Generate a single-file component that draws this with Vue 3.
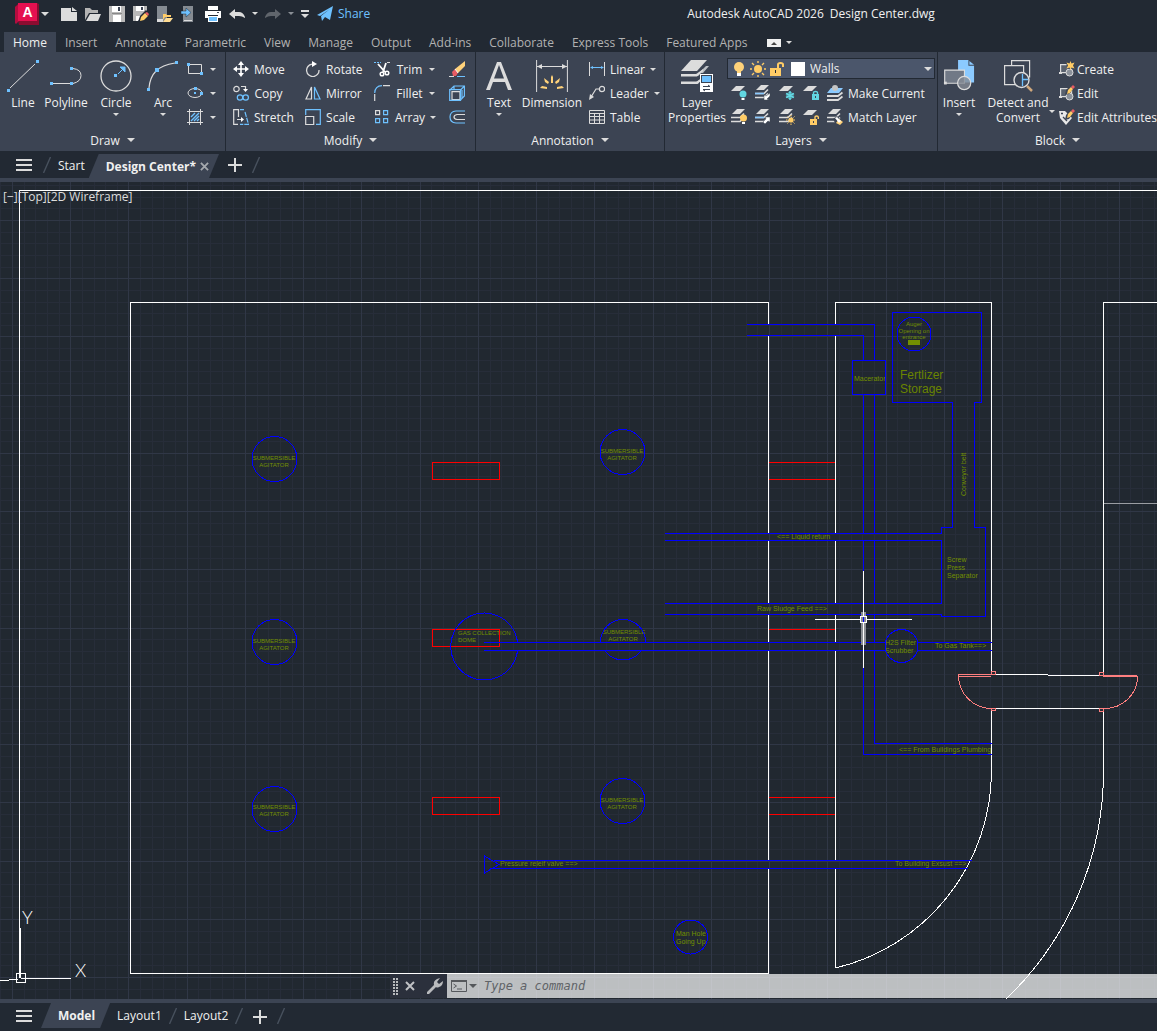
<script setup>
import { ref } from 'vue'

const ribbonTabs = ['Home', 'Insert', 'Annotate', 'Parametric', 'View', 'Manage', 'Output', 'Add-ins', 'Collaborate', 'Express Tools', 'Featured Apps']
const activeTab = ref('Home')
const command = ref('')
const layer = ref('Walls')

const quickAccess = [
  { id: 'new', label: 'New' },
  { id: 'open', label: 'Open' },
  { id: 'save', label: 'Save' },
  { id: 'saveas', label: 'Save As' },
  { id: 'openweb', label: 'Open from Web and Mobile' },
  { id: 'saveweb', label: 'Save to Web and Mobile' },
  { id: 'plot', label: 'Plot' },
]

const modifyColumns = [
  [['move', 'Move'], ['copy', 'Copy'], ['stretch', 'Stretch']],
  [['rotate', 'Rotate'], ['mirror', 'Mirror'], ['scale', 'Scale']],
  [['trim', 'Trim', true], ['fillet', 'Fillet', true], ['array', 'Array', true]],
]
const annotationTools = [['linear', 'Linear', true], ['leader', 'Leader', true], ['table', 'Table']]
const layerRows = [
  { icons: ['lyoff', 'lyiso', 'lyfrz', 'lylock'], main: ['lycur', 'Make Current'] },
  { icons: ['lyon', 'lyuniso', 'lythaw', 'lyunlock'], main: ['lymatch', 'Match Layer'] },
]
const blockTools = [['bcreate', 'Create'], ['bedit', 'Edit'], ['battr', 'Edit Attributes']]

// Drawing grid: minor lines with a major line every fifth
const TOP = 182
const step = 11.648
function gridPath(major) {
  let d = ''
  for (let i = -1; i < 240; i++) {
    if ((i % 5 === 0) !== major) continue
    d += `M${Math.round(12 + i * step) + 0.5} ${TOP}V2400`
  }
  for (let i = -3; i < 200; i++) {
    if ((i % 5 === 0) !== major) continue
    d += `M0 ${Math.round(220 + i * step) + 0.5}H2800`
  }
  return d
}
const minorGrid = gridPath(false)
const majorGrid = gridPath(true)

const agitators = [
  { x: 274, y: 459, t: 460 }, { x: 274, y: 642, t: 643 }, { x: 274, y: 809, t: 809 },
  { x: 622, y: 452, t: 453 }, { x: 622, y: 801, t: 802 },
]
const notes = [
  { x: 854, y: 381, t: 'Macerator' },
  { x: 777, y: 539, t: '<== Liquid return' },
  { x: 757, y: 611, t: 'Raw Sludge Feed ==>' },
  { x: 885, y: 645, t: 'H2S Filter' },
  { x: 885, y: 653, t: 'Scrubber' },
  { x: 935, y: 648, t: 'To Gas Tank==>' },
  { x: 899, y: 752, t: '<== From Buildings Plumbing' },
  { x: 500, y: 866, t: 'Pressure releif valve ==>' },
  { x: 895, y: 866, t: 'To Building Exsust ==>' },
  { x: 947, y: 562, t: 'Screw' },
  { x: 947, y: 570, t: 'Press' },
  { x: 947, y: 578, t: 'Separator' },
  { x: 676, y: 936, t: 'Man Hole' },
  { x: 676, y: 944, t: 'Going Up' },
]
</script>

<template>
  <svg class="sprite" aria-hidden="true">
    <symbol id="i-new" viewBox="0 0 16 16"><path fill="#dcdcdc" d="M0 2h10v4h6v9H0z" /><path fill="#dcdcdc" d="M11 1l5 4h-5z" /></symbol>
    <symbol id="i-open" viewBox="0 0 16 16"><path fill="#b4b4b4" d="M0 14V2h5l2 2h6v3H4z" /><path fill="#dcdcdc" d="M1 15l4-7h11l-3 7z" /></symbol>
    <symbol id="i-save" viewBox="0 0 16 16"><path fill="#b9b9b9" d="M0 0h16v16H0z" /><path fill="#fff" d="M3 0h9v6H3zM4 9h8v7H4z" /><path fill="#3c4453" d="M9 1h2v4H9z" /><path fill="#888" d="M3 7h10v1H3z" /></symbol>
    <symbol id="i-saveas" viewBox="0 0 16 16"><path fill="#b9b9b9" d="M0 0h14v5l-9 10H0z" /><path fill="#fff" d="M3 0h8v5H3zM3 10h5l-3 5H3z" /><path fill="#3c4453" d="M8 1h2v3H8z" /><path fill="#222933" d="M5 16l2-6 6-6 3 3v4l-5 5z" /><path fill="#ffcc66" d="M7 15l1-4 4-4 3 3-4 4z" /><path fill="#e85c63" d="M12 7l2-1 2 2-1 2z" /></symbol>
    <symbol id="i-openweb" viewBox="0 0 16 16"><path fill="#858b92" d="M0 0h10v16H0z" /><path fill="#dcdcdc" d="M0 13h6v3H0z" /><path fill="#ffcc66" d="M6 8h3l1 1h4v2H8l-2 3z" /><path fill="#ffdc92" d="M6 16l3-4h7l-3 4z" /></symbol>
    <symbol id="i-saveweb" viewBox="0 0 16 16"><path fill="#858b92" d="M2 0h10v16H2z" /><path fill="#dcdcdc" d="M3 14h8v1H3z" /><path fill="#6ec1ff" stroke="#222933" stroke-width=".500" d="M0 5h5V2l5 4.500L5 11V8H0z" /></symbol>
    <symbol id="i-plot" viewBox="0 0 16 16"><path fill="#fff" d="M3 0h10v4H3zM0 5h16v7h-3V9H3v3H0z" /><path fill="#3c4453" d="M12 6h2v1h-2z" /><path fill="#fff" d="M3 10h10v6H3z" /><path fill="#6ec1ff" d="M4 11h8v4H4z" /></symbol>
    <symbol id="i-undo" viewBox="0 0 16 16"><path fill="currentColor" d="M0 8l6-5v3h4q4 0 6 5v1q-3-2-6-2H6v3z" /></symbol>
    <symbol id="i-redo" viewBox="0 0 16 16"><path fill="currentColor" d="M16 8l-6-5v3H6q-4 0-6 5v1q3-2 6-2h4v3z" /></symbol>
    <symbol id="i-share" viewBox="0 0 16 16"><path fill="#6ec1ff" d="M0 9L16 0l-3 14-5-3-3 4-1-5L13 3 3 10z" /></symbol>

    <symbol id="i-line" viewBox="0 0 32 32"><path stroke="#dcdcdc" d="M3 28L28 4" /><path fill="#6ec1ff" d="M0 29h3v3H0zM29 0h3v3h-3z" /></symbol>
    <symbol id="i-polyline" viewBox="0 0 32 32"><path stroke="#dcdcdc" fill="none" d="M3 23.500h18M23 8.500q8 1 8 7t-8 8" /><path fill="#6ec1ff" d="M0 22h3v3H0zM20 22h3v3h-3zM20 7h3v3h-3z" /></symbol>
    <symbol id="i-circle" viewBox="0 0 32 32"><circle cx="16" cy="16" r="15" fill="none" stroke="#dcdcdc" stroke-width="1.300" /><path stroke="#6ec1ff" fill="#6ec1ff" d="M18 14l6-6M25 7h-5l5 5z" /><path fill="#6ec1ff" d="M14 14h3v3h-3z" /></symbol>
    <symbol id="i-arc" viewBox="0 0 32 32"><path stroke="#dcdcdc" fill="none" d="M2 28Q3 17 9 11T28 3" stroke-width="1.200" /><path fill="#6ec1ff" d="M0 28h3v3H0zM8 8h4v4H8zM28 1h3v3h-3z" /></symbol>
    <symbol id="i-rect" viewBox="0 0 16 16"><path stroke="#dcdcdc" fill="none" d="M1.500 3.500h13v9h-13z" /><path fill="#6ec1ff" d="M0 2h3v3H0zM13 11h3v3h-3z" /></symbol>
    <symbol id="i-ellipse" viewBox="0 0 16 16"><ellipse cx="8" cy="8" rx="7" ry="4.500" stroke="#dcdcdc" fill="none" /><path fill="#6ec1ff" d="M7 2h3v3H7zM7 7h2v2H7zM13 7h3v3h-3z" /></symbol>
    <symbol id="i-hatch" viewBox="0 0 16 16"><path stroke="#6ec1ff" stroke-width="1.400" d="M4 8l4-4M4 12l8-8M7 12l5-5M10 12l2-2" /><path stroke="#dcdcdc" fill="none" d="M2.500 0v16M13.500 0v16M0 2.500h16M0 13.500h16" /></symbol>

    <symbol id="i-move" viewBox="0 0 16 16"><path stroke="#fff" stroke-width="1.600" d="M8 2v12M2 8h12" /><path fill="#fff" d="M8 0l3 4H5zM8 16l3-4H5zM0 8l4-3v6zM16 8l-4-3v6z" /></symbol>
    <symbol id="i-copy" viewBox="0 0 16 16"><g fill="none" stroke-width="1.200"><circle cx="3.500" cy="4" r="2.700" stroke="#dcdcdc" /><circle cx="7" cy="12.500" r="2.700" stroke="#6ec1ff" /><circle cx="12.700" cy="12.500" r="2.700" stroke="#6ec1ff" /><path stroke="#dcdcdc" d="M8 1.500h4.500V6" /></g><path fill="#fff" d="M10 4h5l-2.500 3z" /></symbol>
    <symbol id="i-stretch" viewBox="0 0 16 16"><path stroke="#dcdcdc" fill="none" stroke-width="1.200" d="M5.500 8V.700H.700v14.600H5M4 10.500h5" /><path fill="#fff" d="M8 8l3 2.500L8 13z" /><path stroke="#6ec1ff" stroke-width="1.200" fill="none" d="M7 .700h4M12 3l3.500 12.300H7" stroke-dasharray="5 1" /></symbol>
    <symbol id="i-rotate" viewBox="0 0 16 16"><path stroke="#dcdcdc" stroke-width="1.300" fill="none" d="M7 3.200A6.200 6.200 0 1 0 14 9" /><path fill="#fff" d="M7 0l5 3-5 3z" /></symbol>
    <symbol id="i-mirror" viewBox="0 0 16 16"><path stroke="#dcdcdc" fill="none" stroke-width="1.200" d="M6.500 2L1 14h5.500z" /><path stroke="#6ec1ff" fill="none" stroke-width="1.200" d="M9.500 2L15 14H9.500z" /></symbol>
    <symbol id="i-scale" viewBox="0 0 16 16"><path stroke="#6ec1ff" fill="none" stroke-width="1.200" d="M.700 6V.700h14.600v14.600H11" /><path stroke="#dcdcdc" fill="none" stroke-width="1.200" d="M.700 7.500h8v8h-8z" /></symbol>
    <symbol id="i-trim" viewBox="0 0 16 16"><path stroke="#6ec1ff" d="M0 1.500h7" stroke-dasharray="2 1" /><path stroke="#dcdcdc" d="M13 1.500h3" /><path stroke="#fff" stroke-width="1.800" d="M4 3l7 8M12 2l-3 9" /><g fill="none" stroke="#fff" stroke-width="1.500"><circle cx="8" cy="13" r="1.800" /><circle cx="13" cy="12" r="1.800" /></g></symbol>
    <symbol id="i-fillet" viewBox="0 0 16 16"><path stroke="#6ec1ff" fill="none" stroke-width="1.200" d="M.700 8Q1 1 8 .700" /><path stroke="#dcdcdc" stroke-width="1.200" d="M9 .700h7M.700 9v7" /></symbol>
    <symbol id="i-array" viewBox="0 0 16 16"><g fill="none" stroke-width="1.200"><path stroke="#dcdcdc" d="M1.600 1.600h4v4h-4z" /><path stroke="#6ec1ff" d="M9.600 1.600h4v4h-4zM1.600 9.600h4v4h-4zM9.600 9.600h4v4h-4z" /></g></symbol>
    <symbol id="i-erase" viewBox="0 0 16 16"><path fill="#ffd27a" d="M6 8l10-8v5L9 12z" /><path fill="#e85c63" d="M3 11l3-3 3 4-2 3H4z" /><path stroke="#fff" d="M6 8l3 4" /><path stroke="#dcdcdc" d="M0 15.500h5" /><path stroke="#6ec1ff" d="M8 15.500h8" /></symbol>
    <symbol id="i-explode" viewBox="0 0 16 16"><g fill="none" stroke-width="1.200"><path stroke="#6ec1ff" d="M1 5l4-4h10.400v10l-4 4M11.500 5l4-4M5 1v3M13 5v8" /><path stroke="#dcdcdc" d="M3 6.600h8v8H3z" /><path stroke="#6ec1ff" d="M.700 4.600V15.300H11.500V4.600z" /></g></symbol>
    <symbol id="i-offset" viewBox="0 0 16 16"><g fill="none" stroke-width="1.200"><path stroke="#6ec1ff" d="M16 2H7q-6 .500-6 6t6 6h9" /><path stroke="#dcdcdc" d="M16 5.500H8Q5 6 5 8t3 2.500h8" /></g></symbol>

    <symbol id="i-text" viewBox="0 0 32 32"><path fill="#dcdcdc" d="M3 30L14 2h4l11 28h-4l-3-8H10l-3 8zM11 18.500h10L16 5z" /></symbol>
    <symbol id="i-dimension" viewBox="0 0 32 32"><path stroke="#dcdcdc" d="M.600 0v32M31.400 0v32M1 6.500h30" /><path fill="#dcdcdc" d="M1 6.500l5-2.500v5zM31 6.500l-5-2.500v5z" /><path fill="#ffd27a" d="M15 17l1-2 1 2v6h-2zM8 18l5 4-1 2-3-2zM24 18l-5 4 1 2 3-2zM4 28l2-2 5 1v2zM28 28l-2-2-5 1v2z" /></symbol>
    <symbol id="i-linear" viewBox="0 0 16 16"><path stroke="#dcdcdc" d="M.500 1v14M15.500 1v14" /><path stroke="#6ec1ff" d="M2 6.500h12" /><path fill="#6ec1ff" d="M1 6.500L4 5v3zM15 6.500L12 5v3z" /></symbol>
    <symbol id="i-leader" viewBox="0 0 16 16"><circle cx="13" cy="4" r="2.600" stroke="#dcdcdc" fill="none" stroke-width="1.200" /><path stroke="#dcdcdc" fill="none" stroke-width="1.200" d="M10 4H7L2 12" /><path fill="#dcdcdc" d="M0 15l1-6 4 3z" /></symbol>
    <symbol id="i-table" viewBox="0 0 16 16"><path fill="none" stroke="#dcdcdc" d="M.500 1.500h15v13H.500zM.500 4.500h15M.500 7.500h15M.500 11h15M5.500 5v10M10.500 5v10" /></symbol>

    <symbol id="i-layerprops" viewBox="0 0 32 32"><path fill="#dcdcdc" d="M10 0h16L16 11H0z" /><path fill="#bcc0c5" d="M21 10l4-4h3l-6 7h-2L17 16H4L1 14h14zM21 18l-4 6H4l-3-2h14z" /><path fill="#dcdcdc" d="M0 14h16l6-5v2l-6 5.500H0zM0 21.500h16l4-3v2.500l-4 3H0z" /><path fill="#fff" d="M19 14h13v18H19z" /><path fill="#3c4453" d="M20 15h11v8H20z" /><path fill="#6ec1ff" d="M21 16h9v6h-9z" /><path stroke="#3c4453" d="M22 26.500h7M22 29.500h7M27 25l2 1.500M24 31l-2-1.500" /></symbol>
    <symbol id="i-bulb" viewBox="0 0 16 16"><circle cx="8" cy="6" r="5" fill="#ffd27a" /><path fill="#ffd27a" d="M6 9h4v3H6z" /><path fill="#fff" d="M6 12h4v3H6z" /></symbol>
    <symbol id="i-sun" viewBox="0 0 16 16"><circle cx="8" cy="8" r="4" fill="#ffcc66" /><path stroke="#ffcc66" stroke-width="1.400" d="M8 0v2M8 14v2M0 8h2M14 8h2M2 2l2 2M12 12l2 2M14 2l-2 2M2 14l2-2" /></symbol>
    <symbol id="i-unlock" viewBox="0 0 16 16"><path fill="#ffcc66" d="M1 7h11v8H1z" /><path stroke="#ffcc66" stroke-width="2" fill="none" d="M9 7V3.500Q9 2 11.500 2T14 3.500V6" /><path fill="#222933" d="M6 9h1v3H6z" /></symbol>
    <symbol id="p-layer1" viewBox="0 0 16 16"><path fill="#dcdcdc" d="M5 1h9L9 6H0z" /></symbol>
    <symbol id="p-layer3" viewBox="0 0 16 16"><path fill="#dcdcdc" d="M6 0h8L9 5H1z" /><path stroke="#dcdcdc" stroke-width="1.600" d="M0 8.500h9l4-4M0 12.500h9l4-4" fill="none" /></symbol>
    <symbol id="i-lyoff" viewBox="0 0 16 16"><use href="#p-layer1" /><circle cx="12" cy="9" r="3.500" fill="#62d7e2" /><path fill="#fff" d="M10.500 13h3v2h-3z" /></symbol>
    <symbol id="i-lyiso" viewBox="0 0 16 16"><use href="#p-layer3" /><path stroke="#8bcaff" stroke-width="1.600" d="M0 8.500h9" /><path fill="#fff" stroke="#3c4453" stroke-width=".500" d="M9 15v-5l2 1 4-3v3l-3 3 2 1z" /></symbol>
    <symbol id="i-lyfrz" viewBox="0 0 16 16"><use href="#p-layer1" /><path stroke="#62d7e2" stroke-width="1.500" d="M11 6v9M7 8.500l8 4M15 8.500l-8 4" /><circle cx="11" cy="10.500" r="3" fill="none" stroke="#62d7e2" /></symbol>
    <symbol id="i-lylock" viewBox="0 0 16 16"><use href="#p-layer1" /><path fill="#62d7e2" d="M9 9h7v6H9z" /><path fill="none" stroke="#62d7e2" stroke-width="1.400" d="M10.500 9V7.500q0-1 2-1t2 1V9" /><path fill="#3c4453" d="M12 11h1v2h-1z" /></symbol>
    <symbol id="i-lyon" viewBox="0 0 16 16"><use href="#p-layer3" /><circle cx="12.500" cy="9" r="3.500" fill="#ffcc66" /><path fill="#fff" d="M11 13h3v2h-3z" /></symbol>
    <symbol id="i-lyuniso" viewBox="0 0 16 16"><use href="#p-layer3" /><path stroke="#8bcaff" stroke-width="1.600" d="M0 8.500h9" /><path fill="#fff" stroke="#3c4453" stroke-width=".500" d="M15 8v5l-2-1-3 3-2-2 3-3-1-2z" /></symbol>
    <symbol id="i-lythaw" viewBox="0 0 16 16"><use href="#p-layer3" /><circle cx="12" cy="11" r="2.600" fill="#ffcc66" /><path stroke="#ffcc66" d="M12 6v1.500M12 14.500V16M7 11h1.500M15 11h1M8.500 7.500l1 1M15.500 7.500l-1 1M8.500 14.500l1-1M15.500 14.500l-1-1" /></symbol>
    <symbol id="i-lyunlock" viewBox="0 0 16 16"><use href="#p-layer1" /><path fill="#ffcc66" d="M7 10h7v6H7z" /><path fill="none" stroke="#ffcc66" stroke-width="1.400" d="M12 10V8q0-1 1.600-1T15.300 8v2" /><path fill="#3c4453" d="M10 12h1v2h-1z" /></symbol>
    <symbol id="i-lycur" viewBox="0 0 16 16"><path fill="#8bcaff" d="M4 3h12l-4 5H0z" /><path fill="none" stroke="#dcdcdc" stroke-width="1.800" d="M0 11h11l4.500-3.500M0 15h11l4.500-3.500" /><circle cx="8" cy="3" r="3" fill="#c4c4c4" /></symbol>
    <symbol id="i-lymatch" viewBox="0 0 16 16"><use href="#p-layer3" /><path fill="#3c4453" d="M6 10l4-3 6 6-3 3H9z" /><path fill="#ffd27a" d="M9 14l3-4 4 3-3 3z" /><path fill="#fff" d="M8 9l2-1 4 4-2 2z" /></symbol>

    <symbol id="i-insert" viewBox="0 0 32 34"><path fill="#8bcaff" d="M15 0h11v6h6v18H15z" /><path fill="#8bcaff" d="M27 1l5 4h-5z" /><path fill="#717986" stroke="#dcdcdc" stroke-width="1.200" d="M.800 10.700h21v14h-21z" /><circle cx="21.500" cy="24.500" r="7" fill="#848b95" fill-opacity=".8" stroke="#dcdcdc" stroke-width="1.300" /><path fill="#dcdcdc" d="M0 23h3v3H0z" /></symbol>
    <symbol id="i-detect" viewBox="0 0 32 32"><path fill="none" stroke="#dcdcdc" stroke-width="1.200" d="M9.600 6V.600h18v17M2.600 5.600h19v19h-19z" /><circle cx="19.500" cy="20" r="7.500" fill="#3c4453" stroke="#dcdcdc" stroke-width="1.400" /><path stroke="#6ec1ff" fill="none" stroke-width="1.300" d="M20.500 14v12M21 19.500h5" /><path stroke="#cfa77c" stroke-width="2.500" d="M25 26l5 5" /></symbol>
    <symbol id="p-block" viewBox="0 0 16 16"><path stroke="#dcdcdc" fill="#59616e" stroke-width="1.200" d="M1.600 3.600h11v8h-11z" /><circle cx="10.500" cy="11.500" r="3.500" fill="#8b919a" stroke="#dcdcdc" /><path fill="#dcdcdc" d="M0 11h3v2H0z" /></symbol>
    <symbol id="i-bcreate" viewBox="0 0 16 16"><use href="#p-block" /><circle cx="11.500" cy="4" r="4" fill="#3c4453" /><path fill="#ffcc66" d="M11.500 0l1 2.500 3-1-1.500 3 1.500 3-3-1-1 2.500-1-2.500-3 1 1.500-3-1.500-3 3 1z" /></symbol>
    <symbol id="i-bedit" viewBox="0 0 16 16"><use href="#p-block" /><path fill="#3c4453" d="M6 10l1-5 6-6 3 3-6 7z" /><path fill="#ffcc66" d="M8 9l1-4 3-3 2 2-3 4z" /><path fill="#e85c63" d="M12 2l2-2 2 2-2 2z" /></symbol>
    <symbol id="i-battr" viewBox="0 0 16 16"><path fill="#e8e8e8" d="M0 2h6l2 2 5 5-6 7-6-7z" /><path stroke="#3c4453" stroke-width="1.300" fill="none" d="M2 4.500h2M4 8l4 4" /><path fill="#3c4453" d="M6 11l1-5 6-7 3 3-6 8z" /><path fill="#ffcc66" d="M8 9l1-4 3-3 2 2-3 4z" /><path fill="#e85c63" d="M12 2l2-2 2 2-2 2z" /></symbol>
    <symbol id="i-menu" viewBox="0 0 16 12"><path fill="#dcdcdc" d="M0 0h16v2H0zM0 5h16v2H0zM0 10h16v2H0z" /></symbol>
    <symbol id="i-plus" viewBox="0 0 14 14"><path fill="#dcdcdc" d="M6 0h2v14H6zM0 6h14v2H0z" /></symbol>
    <symbol id="i-close" viewBox="0 0 10 10"><path stroke="currentColor" stroke-width="2" d="M1 1l8 8M9 1L1 9" /></symbol>
    <symbol id="i-slash" viewBox="0 0 8 16"><path stroke="#48515e" stroke-width="1.400" d="M7.500 0L.500 16" /></symbol>
    <symbol id="i-wrench" viewBox="0 0 16 16"><path fill="#b8babd" d="M0 14l7-7q-1-4 3-6l3-1-3 4 2 2 4-3q0 5-4 6-2 1-3 0l-7 7H0z" /></symbol>
    <symbol id="i-prompt" viewBox="0 0 16 12"><path fill="none" stroke="#55585c" d="M.500.500h15v11H.500z" /><path fill="#55585c" d="M0 0h16v2H0z" /><path fill="none" stroke="#55585c" d="M2.500 4l3 2-3 2M6 9h5" /></symbol>
  </svg>

  <div class="app">
    <header class="titlebar">
      <button class="logo" aria-label="Application menu">
        <svg width="24" height="22" viewBox="0 0 24 22"><path fill="#8b0c30" d="M0 4L4 0h18l2 1v21H4z" /><path fill="#b50d3f" d="M0 4L4 1v17l-3 3-1-1z" /><path fill="#e51050" d="M3 0h19v18H3z" /></svg>
        <span>A</span>
      </button>
      <i class="caret wide"></i>
      <nav class="quick" aria-label="Quick access">
        <button v-for="q in quickAccess" :key="q.id" :aria-label="q.label"><svg class="i16"><use :href="'#i-' + q.id" /></svg></button>
        <button aria-label="Undo"><svg class="i16"><use href="#i-undo" /></svg></button>
      </nav>
      <i class="caret"></i>
      <button class="redo" aria-label="Redo"><svg class="i16"><use href="#i-redo" /></svg></button>
      <i class="caret dim"></i>
      <button class="customize" aria-label="Customize"><i class="bar"></i><i class="caret wide"></i></button>
      <button class="share"><svg class="i16"><use href="#i-share" /></svg>Share</button>
      <div class="caption"><span>Autodesk AutoCAD 2026</span><span>Design Center.dwg</span></div>
    </header>

    <nav class="tabs">
      <button v-for="t in ribbonTabs" :key="t" :class="{ active: t === activeTab }" @click="activeTab = t">{{ t }}</button>
      <button class="minimize" aria-label="Minimize ribbon"><i></i></button>
      <i class="caret"></i>
    </nav>

    <div class="ribbon">
      <section class="panel draw">
        <div class="body">
          <button class="big w-line"><svg class="i32"><use href="#i-line" /></svg>Line</button>
          <button class="big w-poly"><svg class="i32"><use href="#i-polyline" /></svg>Polyline</button>
          <button class="big w-circle"><svg class="i32"><use href="#i-circle" /></svg>Circle<i class="caret"></i></button>
          <button class="big w-arc"><svg class="i32"><use href="#i-arc" /></svg>Arc<i class="caret"></i></button>
          <div class="col shapes">
            <button v-for="s in ['rect', 'ellipse', 'hatch']" :key="s" class="tool" :aria-label="s"><svg class="i16"><use :href="'#i-' + s" /></svg><i class="caret"></i></button>
          </div>
        </div>
        <h2>Draw<i class="caret wide"></i></h2>
      </section>

      <section class="panel modify">
        <div class="body">
          <div v-for="(c, n) in modifyColumns" :key="n" class="col">
            <button v-for="t in c" :key="t[0]" class="tool"><svg class="i16"><use :href="'#i-' + t[0]" /></svg><span>{{ t[1] }}</span><i v-if="t[2]" class="caret"></i></button>
          </div>
          <div class="col">
            <button v-for="s in ['erase', 'explode', 'offset']" :key="s" class="tool" :aria-label="s"><svg class="i16"><use :href="'#i-' + s" /></svg></button>
          </div>
        </div>
        <h2>Modify<i class="caret wide"></i></h2>
      </section>

      <section class="panel annotation">
        <div class="body">
          <button class="big w-text"><svg class="i32"><use href="#i-text" /></svg>Text<i class="caret"></i></button>
          <button class="big w-dim"><svg class="i32"><use href="#i-dimension" /></svg>Dimension</button>
          <div class="col">
            <button v-for="t in annotationTools" :key="t[0]" class="tool"><svg class="i16"><use :href="'#i-' + t[0]" /></svg><span>{{ t[1] }}</span><i v-if="t[2]" class="caret"></i></button>
          </div>
        </div>
        <h2>Annotation<i class="caret wide"></i></h2>
      </section>

      <section class="panel layers">
        <div class="body">
          <button class="big w-props"><svg class="i32"><use href="#i-layerprops" /></svg>Layer<br />Properties</button>
          <div class="col">
            <div class="combo">
              <svg class="i16"><use href="#i-bulb" /></svg>
              <svg class="i16"><use href="#i-sun" /></svg>
              <svg class="i16"><use href="#i-unlock" /></svg>
              <i class="swatch"></i>
              <select v-model="layer" aria-label="Layer"><option>Walls</option></select>
              <i class="caret wide"></i>
            </div>
            <div v-for="r in layerRows" :key="r.main[0]" class="layer-row">
              <button v-for="i in r.icons" :key="i" :aria-label="i"><svg class="i16"><use :href="'#i-' + i" /></svg></button>
              <button class="tool"><svg class="i16"><use :href="'#i-' + r.main[0]" /></svg><span>{{ r.main[1] }}</span></button>
            </div>
          </div>
        </div>
        <h2>Layers<i class="caret wide"></i></h2>
      </section>

      <section class="panel block">
        <div class="body">
          <button class="big w-insert"><svg class="i32"><use href="#i-insert" /></svg>Insert<i class="caret"></i></button>
          <button class="big w-detect"><svg class="i32"><use href="#i-detect" /></svg>Detect and<br />Convert</button>
          <i class="caret side"></i>
          <div class="col">
            <button v-for="t in blockTools" :key="t[0]" class="tool"><svg class="i16"><use :href="'#i-' + t[0]" /></svg><span>{{ t[1] }}</span></button>
          </div>
        </div>
        <h2>Block<i class="caret wide"></i></h2>
      </section>
    </div>

    <nav class="files">
      <button class="menu" aria-label="File tabs menu"><svg width="16" height="12"><use href="#i-menu" /></svg></button>
      <svg class="slash"><use href="#i-slash" /></svg>
      <button class="start">Start</button>
      <div class="current"><button>Design Center*</button><button class="close" aria-label="Close"><svg width="9" height="9"><use href="#i-close" /></svg></button></div>
      <button class="add" aria-label="New tab"><svg width="14" height="14"><use href="#i-plus" /></svg></button>
      <svg class="slash"><use href="#i-slash" /></svg>
    </nav>

    <main class="canvas">
      <svg class="drawing" role="img" aria-label="Floor plan">
        <g transform="translate(0 -182)">
          <path :d="minorGrid" stroke="#272d39" />
          <path :d="majorGrid" stroke="#303746" />

          <g class="notes small">
            <g v-for="a in agitators" :key="a.x + '-' + a.y" text-anchor="middle">
              <text :x="a.x" :y="a.t">SUBMERSIBLE</text>
              <text :x="a.x" :y="a.t + 7">AGITATOR</text>
            </g>
            <g text-anchor="middle">
              <text x="624" y="634">SUBMERSIBLE</text><text x="623" y="641">AGITATOR</text>
              <text x="914" y="326">Auger</text><text x="914" y="333">Opening on</text><text x="914" y="339">entrance</text>
            </g>
            <text x="458" y="635">GAS COLLECTION</text><text x="458" y="642">DOME</text>
            <rect x="908" y="340" width="12" height="5" />
          </g>
          <g class="notes">
            <text v-for="n in notes" :key="n.t" :x="n.x" :y="n.y">{{ n.t }}</text>
            <text transform="translate(966 496) rotate(-90)">Conveyor belt</text>
          </g>
          <g class="notes large"><text x="900" y="379">Fertlizer</text><text x="900" y="393">Storage</text></g>

          <g class="ink white">
            <path d="M1157 190.500H19.500V977M130.500 302V973.500M130 302.500H768.500V324M768.500 336V533M768.500 541V603M768.500 615V642M768.500 651V860M768.500 869V973.500M130 973.500H769" />
            <path d="M835.500 324V302.500H991.500V674M835.500 336V533M835.500 541V603M835.500 615V642M835.500 651V860M835.500 869V968" />
            <path d="M1157 302.500H1103.500V675M991 674.500H1048M1048 675.500H1103M991 708.500H1103M991.500 709V771A203 203 0 0 1 835.500 968M1103.500 709V771A315 315 0 0 1 1006 999" />
            <path d="M1104 503.500H1157" stroke="#9a9da3" />
          </g>
          <g class="ink red">
            <path d="M432.500 462.500h67v17h-67zM432.500 629.500h67v17h-67zM432.500 797.500h67v17h-67z" />
            <path d="M769 462.500h66M769 479.500h66M769 629.500h66M769 797.500h66M769 814.500h66" />
          </g>
          <g class="ink blue">
            <circle v-for="a in agitators" :key="a.x + '-' + a.y" :cx="a.x + 0.5" :cy="a.y" r="22.500" />
            <path d="M600.500 642A22.500 22.500 0 1 1 645.500 642M605 651A22.500 22.500 0 0 0 641 651M517.500 642A33.500 33.500 0 1 0 517.500 651" />
            <circle cx="690.500" cy="937" r="17" /><circle cx="914" cy="334" r="17" /><circle cx="901.500" cy="646" r="16.500" />
            <path d="M747 324.500H874.500V360M747 335.500H863.500V360M852.500 360.500h33v34h-33z" />
            <path d="M892.500 312.500H981.500V402.500H974.500V527.500H985.500V616.500H941.500V614M892.500 312V402.500H952.500V527.500H941.500V533" />
            <path d="M863.500 395V533M863.500 541V571M863.500 667V754.500H992M874.500 395V533M874.500 541V603M874.500 615V642M874.500 651V743.500H992M941.500 541V603" />
            <path d="M665 533.500H942M665 540.500H942M665 603.500H942M665 614.500H942M484 642.500H886M484 650.500H886M917 642.500H992M917 650.500H992M494 860.500H972M490 868.500H968M484.500 856V873L499 864.500z" />
          </g>
          <g class="ink pink">
            <path d="M991 674.500H958.500V676.500H991M958.500 676A33 33 0 0 0 991 708.500M1103 675.500H1137M1103 676.500H1137.500A33 32 0 0 1 1104 708.500" />
            <path d="M991.500 671.500h4v3h-4zM991.500 708.500h4v2h-4zM1099.500 672.500h4v3h-4zM1099.500 708.500h4v3h-4z" />
          </g>

          <rect x="861" y="612" width="5" height="33" fill="#8b8f94" />
          <g class="ink white">
            <path d="M815 619.500H860M867 619.500H912M863.500 571V616M863.500 623V668M860.500 616.500h6v6h-6z" />
            <path d="M863.500 617V622" stroke="#00f" />
            <path d="M16.500 973.500h9v9h-9zM0 980.500H9M9 979.500H18M21 978.500H71" />
            <path d="M20 928V978" stroke-width="2" />
          </g>
          <g class="axis"><text x="22" y="924">Y</text><text x="75" y="977">X</text></g>
        </g>
      </svg>

      <div class="viewport-controls"><button>[−]</button><button>[Top]</button><button>[2D Wireframe]</button></div>

      <form class="command" @submit.prevent>
        <div class="handle">
          <i class="grip"></i>
          <button type="button" aria-label="Close command line"><svg width="10" height="10"><use href="#i-close" /></svg></button>
          <button type="button" aria-label="Customize"><svg class="i16"><use href="#i-wrench" /></svg></button>
        </div>
        <label class="entry">
          <svg width="16" height="12"><use href="#i-prompt" /></svg><i class="caret wide"></i>
          <input v-model="command" type="text" placeholder="Type a command" aria-label="Command" />
        </label>
      </form>
    </main>

    <footer class="layouts">
      <button class="menu" aria-label="Layouts menu"><svg width="16" height="12"><use href="#i-menu" /></svg></button>
      <button class="model">Model</button>
      <button class="layout">Layout1</button>
      <svg class="slash"><use href="#i-slash" /></svg>
      <button class="layout">Layout2</button>
      <svg class="slash"><use href="#i-slash" /></svg>
      <button class="add" aria-label="New layout"><svg width="14" height="14"><use href="#i-plus" /></svg></button>
      <svg class="slash"><use href="#i-slash" /></svg>
    </footer>
  </div>
</template>

<style>
body { margin: 0; background: #222933; }
</style>

<style scoped>
.sprite { position: absolute; width: 0; height: 0; }
.app {
  display: flex;
  flex-direction: column;
  min-height: 100vh;
  overflow: hidden;
  background: #222933;
  color: #f0f0f0;
  font: 12px/15px "Open Sans", "Noto Sans", sans-serif;
}
button, select, input { margin: 0; padding: 0; border: 0; background: none; color: inherit; font: inherit; }
button { display: flex; align-items: center; flex: none; white-space: nowrap; }
svg { display: block; flex: none; }
.i16 { width: 16px; height: 16px; overflow: visible; }
.i32 { width: 32px; height: 32px; overflow: visible; }
.caret { flex: none; width: 0; height: 0; border: 3px solid transparent; border-top-color: #dcdcdc; border-bottom: 0; }
.caret.wide { border-width: 4px; border-bottom: 0; }
.caret.dim { border-top-color: #8a8f96; }

.titlebar { display: flex; align-items: center; height: 27px; padding: 0 0 1px 15px; }
.logo { position: relative; width: 24px; margin-right: 2px; }
.logo span { position: absolute; left: 3px; width: 19px; text-align: center; font: bold 14px/19px "Liberation Sans", sans-serif; color: #fff; top: 0; }
.quick { display: flex; gap: 8px; margin: 0 7px 0 12px; color: #dcdcdc; }
.redo { margin: 0 7px; color: #60656c; }
.customize { flex-direction: column; gap: 2px; margin: 0 8px 0 7px; }
.bar { width: 8px; height: 2px; background: #dcdcdc; }
.share { gap: 5px; color: #6ec1ff; }
.caption { display: flex; gap: 6px; margin-left: 317px; white-space: nowrap; }

.tabs { display: flex; align-items: center; height: 20px; padding: 4px 0 0 4px; color: #b2b2b2; }
.tabs button { height: 20px; padding: 0 9px; }
.tabs .active { background: #3c4453; color: #f0f0f0; }
.tabs .minimize { width: 14px; height: 8px; padding: 0; margin: 2px 5px 0 10px; background: #f0f0f0; justify-content: center; }
.minimize i { border: 3px solid transparent; border-bottom-color: #444; border-top: 0; }

.ribbon { display: flex; height: 99px; background: #3c4453; overflow: hidden; }
.panel { flex: none; display: flex; flex-direction: column; border-right: 1px solid #222933; box-sizing: border-box; }
.panel .body { display: flex; height: 72px; padding-top: 5px; }
.panel h2 { display: flex; justify-content: center; align-items: center; gap: 7px; margin: 0; height: 22px; font: inherit; }
.draw { width: 226px; }
.modify { width: 250px; }
.annotation { width: 189px; }
.layers { width: 273px; }
.block { width: 240px; }
.big { flex-direction: column; justify-content: flex-start; text-align: center; padding-top: 3px; }
.big svg { margin-bottom: 3px; }
.big .caret { margin-top: 3px; }
.w-line { width: 46px; }
.w-poly { width: 40px; }
.w-circle { width: 60px; }
.w-arc { width: 34px; }
.w-text { width: 34px; margin-left: 6px; }
.w-dim { width: 60px; margin: 0 7px 0 6px; }
.w-props { width: 56px; margin: 0 2px 0 4px; }
.w-insert { width: 42px; }
.w-detect { width: 60px; margin-left: 8px; }
.side { margin: 53px 4px 0 1px; }
.col { display: flex; flex-direction: column; }
.tool { height: 24px; gap: 5px; }
.shapes { margin-left: 7px; }
.shapes .tool { gap: 7px; }
.modify .body { padding-left: 7px; }
.modify .col { width: 72px; }
.modify .col:nth-child(2) { width: 69px; }
.modify .col:nth-child(3) { width: 75px; }
.modify .col:nth-child(4) { width: 16px; }
.modify .tool span { min-width: 29px; }
.block .tool { gap: 2px; }
.combo { display: flex; align-items: center; width: 206px; height: 20px; margin: 1px 0 2px; border: 1px solid #222933; background: #4b566b; }
.combo svg { margin-left: 3px; }
.swatch { width: 14px; height: 14px; margin: 0 5px 0 6px; background: #fff; }
.combo select { flex: 1; min-width: 0; appearance: none; }
.combo .caret { margin: 0 2px; }
.layer-row { display: flex; gap: 8px; padding-left: 4px; }

.files { display: flex; align-items: center; height: 27px; padding-left: 16px; border-bottom: 4px solid #3c4453; }
.slash { width: 8px; height: 16px; }
.files .menu { margin-right: 11px; }
.start { margin: 2px 4px 0 7px; }
.current { display: flex; align-items: center; gap: 4px; height: 24px; margin-top: 3px; padding: 0 10px 0 17px; background: #3c4453; clip-path: polygon(10px 0, 100% 0, calc(100% - 10px) 100%, 0 100%); font-weight: bold; }
.close { color: #a5a9ae; }
.files .add { margin: 0 10px 0 9px; }

.canvas { position: relative; flex: 1; min-height: 400px; background: #212830; overflow: hidden; }
.drawing { position: absolute; inset: 0; width: 100%; height: 100%; fill: none; shape-rendering: crispEdges; }
.white { stroke: #fff; }
.red { stroke: #f00; }
.blue { stroke: #00f; }
.pink { stroke: #ff7f7f; }
.notes { fill: #728f00; font: 7px "Liberation Sans", sans-serif; }
.notes.small { font-size: 6px; }
.notes.large { fill: #6a8400; font-size: 12px; }
.axis { fill: #fff; font: 300 18px Lato, sans-serif; }
.viewport-controls { position: absolute; left: 3px; top: 7px; display: flex; color: #dcdcdc; }
.command { position: absolute; left: 390px; right: 0; bottom: 1px; display: flex; height: 24px; }
.handle { display: flex; align-items: center; gap: 12px; width: 54px; padding-left: 3px; background: #2b303c; color: #c0c2c5; }
.grip { width: 5px; height: 17px; margin-right: -5px; background: linear-gradient(90deg, transparent 2px, #2b303c 2px 3px, transparent 3px), repeating-linear-gradient(#b8babd 0 2px, transparent 2px 3px); }
.entry { flex: 1; display: flex; align-items: center; padding-left: 4px; background: rgba(255, 255, 255, 0.7); }
.entry .caret { margin: 0 7px 0 2px; border-top-color: #55585c; }
.entry input { flex: 1; outline: 0; color: #333; font: italic 12px "DejaVu Sans Mono", monospace; }
.entry input::placeholder { color: #606367; opacity: 1; }

.layouts { display: flex; align-items: center; height: 28px; padding-left: 16px; border-top: 4px solid #3c4453; }
.layouts button, .layouts .slash { margin-bottom: 3px; }
.layouts .menu { margin-right: 9px; }
.layouts .model { height: 25px; padding: 0 15px 0 17px; background: #3c4453; clip-path: polygon(10px 0, 100% 0, calc(100% - 10px) 100%, 0 100%); font-weight: bold; }
.layout { margin: 0 7px; }
.layouts .add { margin: 0 10px; }
</style>
